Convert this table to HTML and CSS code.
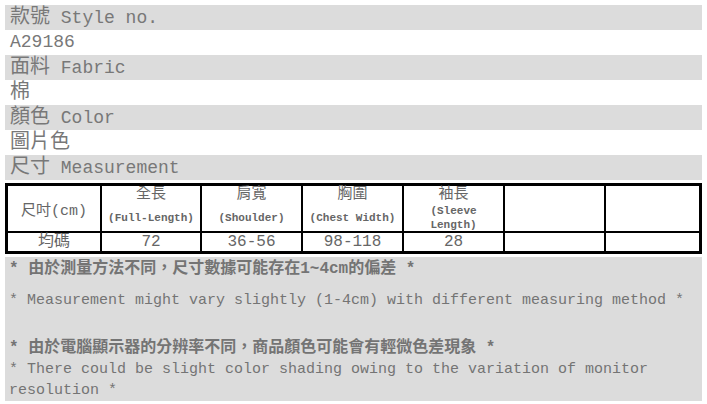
FILE: index.html
```html
<!DOCTYPE html>
<html>
<head>
    <title>A29186</title>
    <link rel="stylesheet" href="styles.css">
</head>
<body>
    <div class="info">
        <div class="info-row shade"><span class="zh">款號</span> Style no.</div>
        <div class="info-row">A29186</div>
        <div class="info-row shade"><span class="zh">面料</span> Fabric</div>
        <div class="info-row"><span class="zh">棉</span></div>
        <div class="info-row shade"><span class="zh">顏色</span> Color</div>
        <div class="info-row"><span class="zh">圖片色</span></div>
        <div class="info-row shade"><span class="zh">尺寸</span> Measurement</div>
    </div>

    <table class="size-table">
        <colgroup>
            <col style="width: 92px">
            <col style="width: 98px">
            <col style="width: 99px">
            <col style="width: 99px">
            <col style="width: 99px">
            <col style="width: 99px">
            <col style="width: 93px">
        </colgroup>
        <tr class="head">
            <td class="first">尺吋(cm)</td>
            <td><div class="zh-label">全長</div><div class="en-label">(Full-Length)</div></td>
            <td><div class="zh-label">肩寬</div><div class="en-label">(Shoulder)</div></td>
            <td><div class="zh-label">胸圍</div><div class="en-label">(Chest Width)</div></td>
            <td><div class="zh-label">袖長</div><div class="en-label">(Sleeve Length)</div></td>
            <td></td>
            <td></td>
        </tr>
        <tr class="body">
            <td>均碼</td>
            <td>72</td>
            <td>36-56</td>
            <td>98-118</td>
            <td>28</td>
            <td></td>
            <td></td>
        </tr>
    </table>

    <div class="notes">
        <p class="note zh-note first">* 由於測量方法不同，尺寸數據可能存在1~4cm的偏差 *</p>
        <p class="note en-note second">* Measurement might vary slightly (1-4cm) with different measuring method *</p>
        <p class="note zh-note third">* 由於電腦顯示器的分辨率不同，商品顏色可能會有輕微色差現象 *</p>
        <p class="note en-note">* There could be slight color shading owing to the variation of monitor resolution *</p>
    </div>
</body>
</html>
```

FILE: styles.css
```css
* {
    margin: 0px;
    padding: 0px;
    box-sizing: border-box;
}
body {
    padding: 5px;
    width: 707px;
    font-family: "Liberation Mono", "Noto Sans CJK TC", monospace;
    color: #787878;
    background: #fff;
}
.info-row {
    height: 25px;
    line-height: 25px;
    font-size: 18px;
    padding-left: 5px;
    white-space: nowrap;
}
.info-row.shade {
    background: #dcdcdc;
}
.info-row .zh {
    font-size: 20px;
}

.size-table {
    margin-top: 3px;
    width: 697px;
    table-layout: fixed;
    border: 1px solid #000;
    border-spacing: 2px;
    background: #000;
    color: #666;
    text-align: center;
}
.size-table td {
    background: #fff;
    padding: 0;
    vertical-align: top;
}
.size-table .head td {
    height: 45px;
}
.size-table .head td.first {
    vertical-align: middle;
    font-size: 15px;
}
.size-table .zh-label {
    font-size: 15px;
    line-height: 18px;
}
.size-table .en-label {
    height: 27px;
    display: flex;
    align-items: center;
    justify-content: center;
    font-size: 11px;
    font-weight: bold;
    line-height: 14px;
    padding: 0 4px;
}
.size-table .body td {
    height: 18px;
    font-size: 16px;
    line-height: 18px;
}

.notes {
    margin-top: 3px;
    height: 144px;
    background: #dcdcdc;
    padding: 2px 0 0 4px;
    color: #747474;
}
.notes .note {
    line-height: 21px;
}
.notes .zh-note {
    font-size: 16px;
    font-weight: bold;
}
.notes .en-note {
    font-size: 15px;
}
.notes .second {
    margin-top: 10px;
}
.notes .third {
    margin-top: 27px;
}
```
